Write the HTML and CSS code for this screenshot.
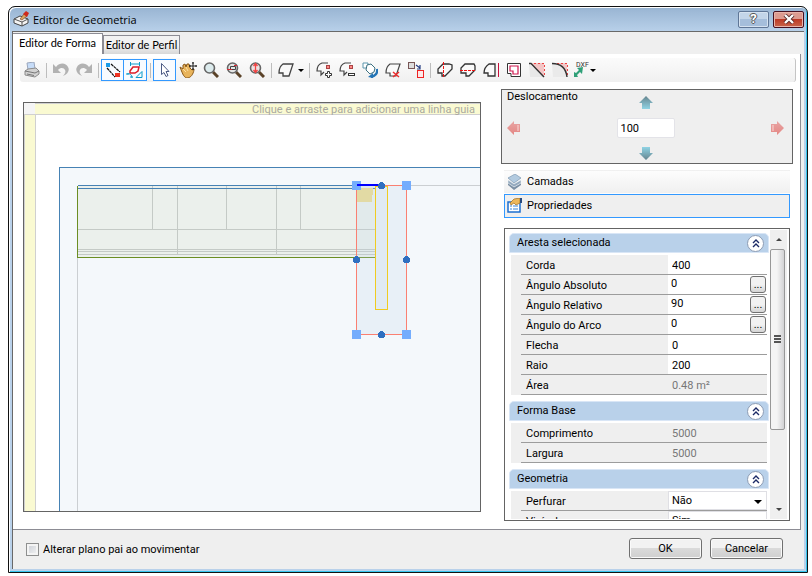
FILE: index.html
```
<!DOCTYPE html>
<html lang="pt-BR">
<head>
    <meta charset="UTF-8">
    <meta name="viewport" content="width=device-width, initial-scale=1.0">
    <title>Editor de Geometria</title>
    <link rel="stylesheet" href="styles.css">
</head>
<body>
    <div class="window">
        <header class="titlebar">
            <svg class="app-icon" width="16" height="16" viewBox="0 0 16 16">
                <path d="M1 8l6-3 8 3v4l-6 3-8-3z" fill="#f4f4f4" stroke="#444"/>
                <path d="M1 8l8 3 6-3M9 11v4" fill="none" stroke="#555"/>
                <path d="M7 8l4-5 3 2-5 4z" fill="#d8a860" stroke="#7a3a20" stroke-width=".6"/>
                <path d="M10 3l3-3 3 2-2 4z" fill="#cf2a1c"/>
            </svg>
            <h1>Editor de Geometria</h1>
            <button class="caption-btn help" type="button" aria-label="Ajuda">?</button>
            <button class="caption-btn close" type="button" aria-label="Fechar">
                <svg width="12" height="10" viewBox="0 0 12 10">
                    <path d="M2 1l8 8M10 1l-8 8" stroke="#5a2a2a" stroke-width="4"/>
                    <path d="M2 1l8 8M10 1l-8 8" stroke="#fff" stroke-width="2.4"/>
                </svg>
            </button>
        </header>

        <main class="client">
            <nav class="tabs">
                <button class="tab active" type="button">Editor de Forma</button>
                <button class="tab" type="button">Editor de Perfil</button>
            </nav>

            <div class="page">
                <div class="toolbar">
                    <button class="tool" type="button" aria-label="Imprimir">
                        <svg width="16" height="16" viewBox="0 0 16 16">
                            <path d="M3 1l7-1 1 7-7 1z" fill="#c6dcf8" stroke="#9aa6bc"/>
                            <path d="M1 9l3-2 8-1 3 3v3l-4 3-10-2z" fill="#d2d2d2" stroke="#8c8c8c"/>
                            <path d="M1 9l10 2 4-2M3 12l7 1.500" fill="none" stroke="#777"/>
                        </svg>
                    </button>
                    <span class="sep"></span>
                    <button class="tool" type="button" aria-label="Desfazer">
                        <svg width="16" height="16" viewBox="0 0 16 16">
                            <path d="M0 2v9h8l-3-3c3-3 6-2 7 0 1 2 0 4-2 6 5-2 7-6 5-9-2-4-8-5-12 0z" fill="#b2b2b2"/>
                        </svg>
                    </button>
                    <button class="tool" type="button" aria-label="Refazer">
                        <svg width="16" height="16" viewBox="0 0 16 16">
                            <path d="M16 2v9H8l3-3C8 5 5 6 4 8c-1 2 0 4 2 6C1 12-1 8 1 5c2-4 8-5 12 0z" fill="#b2b2b2"/>
                        </svg>
                    </button>
                    <span class="sep"></span>
                    <button class="tool on" type="button" aria-label="Guias">
                        <svg width="16" height="16" viewBox="0 0 16 16">
                            <rect x="1" y="1" width="4" height="4" fill="#199be8"/>
                            <rect x="10" y="11" width="5" height="4" fill="#ee3322"/>
                            <path d="M6 2l9 8M2 6l8 9" stroke="#111" stroke-width="1.200" stroke-dasharray="3 .6"/>
                        </svg>
                    </button>
                    <button class="tool on" type="button" aria-label="Cotas">
                        <svg width="18" height="16" viewBox="0 0 18 16">
                            <path d="M4.500 0v4M13.500 0v4M4 2h10" stroke="#0b9ac8" fill="none"/>
                            <path d="M4 9l3-4h6l-1 4-3 2H4z" fill="#fff" stroke="#dc1c28" stroke-width="1.500"/>
                            <path d="M1 12c3-1 5 1 5 4M0 12h3M10 15.500l6-6v6zM4 15h3" stroke="#0b9ac8" fill="none"/>
                        </svg>
                    </button>
                    <span class="sep"></span>
                    <button class="tool on" type="button" aria-label="Selecionar">
                        <svg width="16" height="16" viewBox="0 0 16 16">
                            <path d="M4.500 1.500v11l2.500-2 2 4 2-1-2-4h3z" fill="#fff" stroke="#4b5a84"/>
                        </svg>
                    </button>
                    <button class="tool" type="button" aria-label="Mover vista">
                        <svg width="18" height="16" viewBox="0 0 18 16">
                            <path d="M1 5l3 2 0-4 2-1 1 3 1-3h2l1 4 2 2 2-1c0 3-2 8-6 9-4 0-5-3-8-11z" fill="#e8b45c" stroke="#895717"/>
                            <path d="M4 7l3 3M7 5l2 4" stroke="#fbe0a5"/>
                            <path d="M14 0v8M10 4h8M13 1h2M13 7h2M11 3v2M17 3v2" stroke="#222"/>
                        </svg>
                    </button>
                    <button class="tool" type="button" aria-label="Zoom">
                        <svg width="16" height="16" viewBox="0 0 16 16">
                            <path d="M10 10l5 5" stroke="#5a4228" stroke-width="3"/>
                            <circle cx="6.500" cy="6" r="5" fill="#dcebed" stroke="#666" stroke-width="1.600"/>
                        </svg>
                    </button>
                    <button class="tool" type="button" aria-label="Zoom janela">
                        <svg width="16" height="16" viewBox="0 0 16 16">
                            <path d="M10 10l5 5" stroke="#5a4228" stroke-width="3"/>
                            <circle cx="6.500" cy="6" r="5" fill="#e4e6e6" stroke="#666" stroke-width="1.600"/>
                            <path d="M4.500 4.500h5v3h-5z" fill="none" stroke="#444"/>
                            <path d="M1 7.500h5M8 3.500h3" fill="none" stroke="#d52a36"/>
                        </svg>
                    </button>
                    <button class="tool" type="button" aria-label="Zoom extensão">
                        <svg width="16" height="16" viewBox="0 0 16 16">
                            <path d="M10 10l5 5" stroke="#5a4228" stroke-width="3"/>
                            <circle cx="6.500" cy="6" r="5" fill="#eee2e2" stroke="#666" stroke-width="1.600"/>
                            <path d="M6.500 2v8M4.500 4l2-2.500 2 2.500M4.500 8l2 2.500 2-2.500" fill="none" stroke="#f04444" stroke-width="1.300"/>
                        </svg>
                    </button>
                    <span class="sep"></span>
                    <button class="tool" type="button" aria-label="Forma">
                        <svg width="16" height="16" viewBox="0 0 16 16">
                            <path d="M5 2h10l-4 12H5v-3H1c0-4 1-7 4-9z" fill="#fafafa" stroke="#444" stroke-width="1.300"/>
                        </svg>
                    </button>
                    <button class="drop" type="button" aria-label="Mais formas"></button>
                    <span class="sep"></span>
                    <button class="tool" type="button" aria-label="Adicionar ponto">
                        <svg width="16" height="16" viewBox="0 0 16 16">
                            <path d="M12 1H6C3 2 1 5 1 9h4v4l3-3" fill="#fafafa" stroke="#444" stroke-width="1.200"/>
                            <rect x="10.500" y="3.500" width="3" height="3" fill="#f88" stroke="#a44"/>
                            <path d="M11.500 9.500h2v2h2v2h-2v2h-2v-2h-2v-2h2z" fill="#fff" stroke="#333"/>
                        </svg>
                    </button>
                    <button class="tool" type="button" aria-label="Remover ponto">
                        <svg width="16" height="16" viewBox="0 0 16 16">
                            <path d="M12 1H6C3 2 1 5 1 9h4v4l3-3" fill="#fafafa" stroke="#444" stroke-width="1.200"/>
                            <rect x="10.500" y="3.500" width="3" height="3" fill="#f88" stroke="#a44"/>
                            <rect x="9.500" y="11.500" width="6" height="2" fill="#fff" stroke="#333"/>
                        </svg>
                    </button>
                    <button class="tool" type="button" aria-label="Girar">
                        <svg width="16" height="16" viewBox="0 0 16 16">
                            <path d="M1 1h5v5H1z" fill="#fff" stroke="#5a96ad"/>
                            <path d="M5 3l4-1 4 4-1 4-4 2-4-4z" fill="#fff" stroke="#3c7080"/>
                            <path d="M15 7c1 4-2 7-6 8" fill="none" stroke="#2374b5" stroke-width="2.500"/>
                            <path d="M6 15l5-4v5z" fill="#2374b5"/>
                        </svg>
                    </button>
                    <button class="tool" type="button" aria-label="Excluir forma">
                        <svg width="16" height="16" viewBox="0 0 16 16">
                            <path d="M5 2h10l-4 12H5v-3H1c0-4 1-7 4-9z" fill="#fafafa" stroke="#444" stroke-width="1.200"/>
                            <path d="M8 10l6 5M14 10l-6 5" stroke="#ee2b2b" stroke-width="1.500"/>
                        </svg>
                    </button>
                    <button class="tool" type="button" aria-label="Copiar forma">
                        <svg width="16" height="16" viewBox="0 0 16 16">
                            <rect x=".5" y=".5" width="6" height="6" fill="#ddd" stroke="#755"/>
                            <path d="M8 3l4 3M12 3v4H9" fill="none" stroke="#223a80" stroke-width="1.200"/>
                            <rect x="9.500" y="8.500" width="6" height="7" fill="#fde8e8" stroke="#e22"/>
                        </svg>
                    </button>
                    <span class="sep"></span>
                    <button class="tool" type="button" aria-label="Espelhar vertical">
                        <svg width="16" height="16" viewBox="0 0 16 16">
                            <path d="M6 2h6l3 1v4l-7 7H5v-3H1V7z" fill="#fafafa" stroke="#333" stroke-width="1.300"/>
                            <path d="M6.500 0v16" stroke="#e11" stroke-dasharray="3 1"/>
                        </svg>
                    </button>
                    <button class="tool" type="button" aria-label="Espelhar horizontal">
                        <svg width="16" height="16" viewBox="0 0 16 16">
                            <path d="M5 2h9l1 2v4l-6 6H6v-3H1V6z" fill="#fafafa" stroke="#333" stroke-width="1.300"/>
                            <path d="M0 8.500h16" stroke="#e11" stroke-dasharray="3 1"/>
                        </svg>
                    </button>
                    <button class="tool" type="button" aria-label="Deslocar aresta">
                        <svg width="16" height="16" viewBox="0 0 16 16">
                            <path d="M12 2H6C3 4 1 7 1 11h4v3h7z" fill="#fafafa" stroke="#333" stroke-width="1.300"/>
                            <path d="M15.500 1v14" stroke="#c8103c"/>
                        </svg>
                    </button>
                    <button class="tool" type="button" aria-label="Contorno">
                        <svg width="16" height="16" viewBox="0 0 16 16">
                            <path d="M1.500 1.500h13v13H5v-3H1.500z" fill="#fff" stroke="#333"/>
                            <path d="M4 4h8v8H7V9H4z" fill="#fff" stroke="#d01850" stroke-width="1.200"/>
                        </svg>
                    </button>
                    <button class="tool" type="button" aria-label="Chanfro">
                        <svg width="16" height="16" viewBox="0 0 16 16">
                            <path d="M0 2l1 13h14z" fill="#e8e8e8"/>
                            <path d="M1 1h14v14z" fill="#f3c6c6"/>
                            <path d="M5 1.500h10.500V15" fill="none" stroke="#e44" stroke-dasharray="2 2"/>
                            <path d="M0 1.500h2L15 15" fill="none" stroke="#333" stroke-width="1.400"/>
                        </svg>
                    </button>
                    <button class="tool" type="button" aria-label="Arredondar">
                        <svg width="16" height="16" viewBox="0 0 16 16">
                            <path d="M0 2c9 0 14 5 15 13H1z" fill="#eaeaea"/>
                            <path d="M3 1h12v13C14 6 10 2 3 1z" fill="#f3c6c6"/>
                            <path d="M5 1.500h10.500V15" fill="none" stroke="#e44" stroke-dasharray="2 2"/>
                            <path d="M0 1.500c9 0 14 5 15 13.500" fill="none" stroke="#333" stroke-width="1.400"/>
                        </svg>
                    </button>
                    <button class="tool dxf" type="button" aria-label="Importar DXF">
                        <svg width="18" height="18" viewBox="0 0 18 18">
                            <path d="M3 16v-5l2 1 3-3-2-2 6-1-1 7-2-2-3 3 1 2z" fill="#2fa078"/>
                            <text x="5" y="6">DXF</text>
                        </svg>
                    </button>
                    <button class="drop" type="button" aria-label="Opções DXF"></button>
                </div>

                <div class="workspace">
                    <!-- Drawing area, 1 unit = 1px -->
                    <svg class="canvas">
                        <rect class="plane" x="35.500" y="64.500" width="100%" height="100%"/>
                        <path class="axis" d="M53.500 155v2000M387 82.500h2000"/>

                        <rect class="room" x="54" y="83" width="298" height="71"/>
                        <path class="grid" d="M128.500 83v43M153.500 83v68M202.500 83v43M252.500 83v68M276.500 83v43
                            M54 126.500h298M54 146.500h298M54 148.500h298M54 151.500h298"/>
                        <path class="wall" d="M53.500 83v71.500H352"/>
                        <path class="edge" d="M54 82.500h298M54 85.500h298"/>

                        <rect class="selection" x="332.500" y="82.500" width="50" height="149"/>
                        <path class="corner-mark" d="M333 85h16v7h-1v7h-15z"/>
                        <rect class="pillar" x="351.500" y="83.500" width="12" height="123"/>

                        <rect class="handle" x="328" y="78" width="9" height="9"/>
                        <rect class="handle" x="378" y="78" width="9" height="9"/>
                        <rect class="handle" x="328" y="227" width="9" height="9"/>
                        <rect class="handle" x="378" y="227" width="9" height="9"/>
                        <path class="active-edge" d="M333 82h22"/>
                        <circle class="mid" cx="357.500" cy="82.500" r="3.500"/>
                        <circle class="mid" cx="332.500" cy="156.500" r="3.500"/>
                        <circle class="mid" cx="382.500" cy="156.500" r="3.500"/>
                        <circle class="mid" cx="357.500" cy="231.500" r="3.500"/>

                        <rect class="ruler" x=".5" y=".5" width="11" height="100%"/>
                        <rect class="ruler" x=".5" y=".5" width="100%" height="11"/>
                        <rect class="ruler-corner" x="0" y="0" width="11" height="11"/>
                        <text class="hint" x="100%" dx="-5" y="10">Clique e arraste para adicionar uma linha guia</text>
                    </svg>

                    <aside class="side">
                        <div class="offset">
                            <label for="offset">Deslocamento</label>
                            <button class="arrow up" type="button" aria-label="Para cima">
                                <svg width="14" height="13" viewBox="0 0 14 13"><path d="M7 0l7 7h-3v6H3V7H0z" fill="url(#teal)"/></svg>
                            </button>
                            <button class="arrow left" type="button" aria-label="Para a esquerda">
                                <svg width="13" height="14" viewBox="0 0 13 14"><path d="M0 7l7-7v3h6v8H7v3z" fill="url(#red)"/><path d="M11 4v6" stroke="#fbd8d6"/></svg>
                            </button>
                            <input id="offset" type="text" value="100">
                            <button class="arrow right" type="button" aria-label="Para a direita">
                                <svg width="13" height="14" viewBox="0 0 13 14"><path d="M13 7L6 0v3H0v8h6v3z" fill="url(#red)"/><path d="M2 4v6" stroke="#fbd8d6"/></svg>
                            </button>
                            <button class="arrow down" type="button" aria-label="Para baixo">
                                <svg width="14" height="13" viewBox="0 0 14 13">
                                    <defs>
                                        <linearGradient id="teal" x2="0" y2="1">
                                            <stop offset="0" stop-color="#66858f"/>
                                            <stop offset="1" stop-color="#8fd3e4"/>
                                        </linearGradient>
                                        <linearGradient id="teal-down" x2="0" y2="1">
                                            <stop offset="0" stop-color="#8fd3e4"/>
                                            <stop offset="1" stop-color="#66858f"/>
                                        </linearGradient>
                                        <linearGradient id="red" x2="0" y2="1">
                                            <stop offset="0" stop-color="#e8a5a4"/>
                                            <stop offset="1" stop-color="#e48784"/>
                                        </linearGradient>
                                    </defs>
                                    <path d="M7 13l7-7h-3V0H3v6H0z" fill="url(#teal-down)"/>
                                </svg>
                            </button>
                        </div>

                        <div class="stack">
                            <button type="button">
                                <svg width="16" height="16" viewBox="0 0 16 16">
                                    <path d="M1 9l6 4 7-4v2l-7 5-6-5z" fill="#7b8fa4"/>
                                    <path d="M1 6l6 4 7-4v3l-7 4-6-4z" fill="#94a9be" stroke="#f4f8fb" stroke-width=".5"/>
                                    <path d="M1 4l7-4 6 4-7 5z" fill="#b3cbe0" stroke="#7e98b2" stroke-width=".7"/>
                                </svg>
                                Camadas
                            </button>
                            <button class="current" type="button">
                                <svg width="16" height="16" viewBox="0 0 16 16">
                                    <rect x="1" y="4" width="12" height="10" fill="#fff" stroke="#1c6fd0" stroke-width="1.500"/>
                                    <path d="M3 8h2M3 11h2M6 8h5M6 11h5" stroke="#3b87dc"/>
                                    <path d="M3 5l4-4 6-1v5l-4 2-2-2-3 2z" fill="#edb85c" stroke="#9a6a20" stroke-width=".7"/>
                                    <path d="M13 0h2v5h-2z" fill="#284a7e"/>
                                </svg>
                                Propriedades
                            </button>
                        </div>

                        <div class="props">
                            <div class="groups">
                                <section>
                                    <h2>Aresta selecionada <button class="fold" type="button" aria-label="Recolher"><svg width="8" height="9" viewBox="0 0 8 9"><path d="M1 4l3-3 3 3M1 8l3-3 3 3"/></svg></button></h2>
                                    <div class="rows">
                                        <div class="row"><label for="corda">Corda</label><input id="corda" value="400"></div>
                                        <div class="row"><label for="abs">Ângulo Absoluto</label><span class="with-btn"><input id="abs" value="0"><button type="button">...</button></span></div>
                                        <div class="row"><label for="rel">Ângulo Relativo</label><span class="with-btn"><input id="rel" value="90"><button type="button">...</button></span></div>
                                        <div class="row"><label for="arco">Ângulo do Arco</label><span class="with-btn"><input id="arco" value="0"><button type="button">...</button></span></div>
                                        <div class="row"><label for="flecha">Flecha</label><input id="flecha" value="0"></div>
                                        <div class="row"><label for="raio">Raio</label><input id="raio" value="200"></div>
                                        <div class="row"><label for="area">Área</label><input id="area" value="0.48 m²" readonly></div>
                                    </div>
                                </section>
                                <section>
                                    <h2>Forma Base <button class="fold" type="button" aria-label="Recolher"><svg width="8" height="9" viewBox="0 0 8 9"><path d="M1 4l3-3 3 3M1 8l3-3 3 3"/></svg></button></h2>
                                    <div class="rows">
                                        <div class="row"><label for="comp">Comprimento</label><input id="comp" value="5000" readonly></div>
                                        <div class="row"><label for="larg">Largura</label><input id="larg" value="5000" readonly></div>
                                    </div>
                                </section>
                                <section>
                                    <h2>Geometria <button class="fold" type="button" aria-label="Recolher"><svg width="8" height="9" viewBox="0 0 8 9"><path d="M1 4l3-3 3 3M1 8l3-3 3 3"/></svg></button></h2>
                                    <div class="rows">
                                        <div class="row"><label for="perf">Perfurar</label><span class="combo"><select id="perf"><option>Não</option><option>Sim</option></select></span></div>
                                        <div class="row"><label for="vis">Visível</label><span class="combo"><select id="vis"><option>Sim</option><option>Não</option></select></span></div>
                                    </div>
                                </section>
                            </div>
                            <div class="scrollbar">
                                <span class="tri tri-up"></span>
                                <div class="track"><div class="thumb"></div></div>
                                <span class="tri tri-down"></span>
                            </div>
                        </div>
                    </aside>
                </div>
            </div>

            <footer>
                <label><input type="checkbox"> Alterar plano pai ao movimentar</label>
                <button type="button">OK</button>
                <button type="button">Cancelar</button>
            </footer>
        </main>
    </div>
</body>
</html>
```
FILE: styles.css
```
* {
    box-sizing: border-box;
}

body {
    margin: 0;
    padding: 6px 4px 3px 8px;
    height: 100vh;
    background: #fff;
    color: #000;
    font-family: Roboto, "Liberation Sans", sans-serif;
    font-size: 11px;
    line-height: 14px;
}

button, input, select {
    font: inherit;
    color: inherit;
    margin: 0;
    padding: 0;
    border: 0;
    border-radius: 0;
    background: none;
}

svg {
    display: block;
}

/* window frame */
.window {
    height: 100%;
    display: flex;
    flex-direction: column;
    padding: 0 3px 3px;
    border: 1px solid #111;
    border-radius: 7px 7px 0 0;
    background: linear-gradient(#98b4d2, #b9d1ea 25px);
    box-shadow: inset 1px 1px 0 #fff, inset -1px -1px 0 #35c5ee;
}

.titlebar {
    display: flex;
    align-items: center;
    height: 24px;
    gap: 4px;
    flex: none;
}

.titlebar h1 {
    flex: 1;
    margin: 0;
    padding-top: 1px;
    font-family: "Open Sans", sans-serif;
    font-size: 11px;
    font-weight: normal;
}

.app-icon {
    margin-left: 1px;
}

.caption-btn {
    width: 31px;
    height: 17px;
    display: flex;
    align-items: center;
    justify-content: center;
    border: 1px solid #5f7696;
    border-radius: 2px;
    background: linear-gradient(#c3d5e9 50%, #a5bedb 50%);
    box-shadow: inset 0 0 0 1px #d5e2f0;
}

.help {
    color: #fff;
    font-size: 13px;
    font-weight: bold;
    text-shadow: 1px 0 #555, -1px 0 #555, 0 1px #555, 0 -1px #555;
}

.close {
    border-color: #451020;
    background: linear-gradient(#dd9b90 45%, #bd3a26 50%, #c8654b);
    box-shadow: inset 0 0 0 1px #e8b3aa;
}

.client {
    flex: 1;
    min-height: 0;
    display: flex;
    flex-direction: column;
    border-top: 1px solid #696969;
    border-left: 1px solid #696969;
    background: #efefef;
}

/* tabs */
.tabs {
    display: flex;
    align-items: flex-end;
    height: 22px;
    flex: none;
}

.tab {
    height: 19px;
    width: 77px;
    border: 1px solid #8c8c94;
    border-bottom: 0;
    background: linear-gradient(#f2f2f2 50%, #d8d8d8);
    font-family: Lato, Roboto, sans-serif;
    white-space: nowrap;
}

.tab.active {
    width: 90px;
    height: 21px;
    padding-bottom: 2px;
    border-left: 0;
    background: #fff;
}

.page {
    flex: 1;
    min-height: 0;
    display: flex;
    flex-direction: column;
    margin-right: 3px;
    padding: 4px 4px 8px 7px;
    border: 1px solid #8c8c94;
    border-width: 0 1px 1px 0;
    background: #fff;
}

/* toolbar */
.toolbar {
    display: flex;
    align-items: center;
    height: 24px;
    flex: none;
    border-radius: 3px;
    border-right: 1px solid #c4c4c4;
    background: linear-gradient(#fbfbfb, #f0f0f0);
}

.tool {
    width: 23px;
    height: 22px;
    display: flex;
    align-items: center;
    justify-content: center;
    flex: none;
}

.tool.on {
    border: 1px solid #3399ff;
    background: #f8fbff;
}

.tool.on + .tool.on {
    border-left: 0;
}

.sep {
    width: 6px;
    height: 15px;
    flex: none;
    background: linear-gradient(#bdbdbd, #bdbdbd) 3px 0 / 1px 100% no-repeat;
}

.drop {
    width: 9px;
    height: 22px;
}

.drop::before {
    content: "";
    display: block;
    margin-left: 1px;
    border: 3px solid transparent;
    border-top-color: #000;
    border-bottom: 0;
    width: 0;
}

.dxf {
    width: 18px;
}

.dxf text {
    font-size: 7px;
    fill: #333;
}

/* workspace */
.workspace {
    flex: 1;
    min-height: 0;
    display: flex;
    gap: 20px;
    padding: 7px 3px 0;
}

.canvas {
    flex: 1;
    min-width: 0;
    align-self: stretch;
    margin: 13px 0 9px;
    border: 1px solid #646464;
    background: #fff;
    overflow: hidden;
    shape-rendering: crispEdges;
}

.plane {
    fill: #f4f8fb;
    stroke: #4682b4;
}

.axis {
    fill: none;
    stroke: #cbcfd2;
}

.room {
    fill: #ebf0ec;
}

.grid {
    fill: none;
    stroke: #c4cac6;
}

.wall {
    fill: none;
    stroke: #6b8e23;
}

.edge {
    fill: none;
    stroke: #4682b4;
}

.selection {
    fill: rgba(190, 212, 232, .22);
    stroke: #fa8072;
}

.corner-mark {
    fill: #e2daa4;
}

.pillar {
    fill: #e0eaf3;
    stroke: #f0cc20;
}

.handle {
    fill: #74adfd;
}

.active-edge {
    stroke: #0000ff;
    stroke-width: 2;
}

.mid {
    fill: #2f6fc0;
}

.ruler {
    fill: #fafad2;
    stroke: #d0d0d0;
}

.ruler-corner {
    fill: #f5f5f5;
}

.hint {
    fill: #a9a9a0;
    font-size: 11px;
    text-anchor: end;
}

/* right side */
.side {
    width: 292px;
    display: flex;
    flex-direction: column;
    flex: none;
}

.offset {
    display: grid;
    grid-template-columns: 1fr 58px 1fr;
    grid-template-rows: 13px 20px 13px;
    row-gap: 9px;
    align-items: center;
    height: 75px;
    padding: 6px 8px 3px 5px;
    border: 1px solid #646464;
    background: #efefef;
}

.offset label {
    align-self: start;
    grid-area: 1 / 1;
    margin-top: -6px;
}

.offset input {
    grid-area: 2 / 2;
    height: 20px;
    padding: 0 3px;
    border: 1px solid #e3e3e8;
    border-radius: 2px;
    background: #fff;
}

.up {
    grid-area: 1 / 2;
    justify-self: center;
}

.left {
    grid-area: 2 / 1;
    justify-self: start;
}

.right {
    grid-area: 2 / 3;
    justify-self: end;
}

.down {
    grid-area: 3 / 2;
    justify-self: center;
}

.stack {
    margin: 6px 3px 10px;
    flex: none;
}

.stack button {
    display: flex;
    align-items: center;
    gap: 4px;
    width: 100%;
    height: 24px;
    padding: 0 2px;
    border: 1px solid transparent;
    background: linear-gradient(#fdfdfd, #f0f0f0);
}

.stack .current {
    border-color: #3399ff;
    background: #efefef;
}

/* property grid */
.props {
    flex: 1;
    min-height: 0;
    display: flex;
    margin: 0 3px;
    padding: 1px 2px 1px 4px;
    border: 1px solid #646464;
    background: #fff;
}

.groups {
    flex: 1;
    overflow: hidden;
    padding-top: 3px;
}

section {
    margin-bottom: 6px;
}

h2 {
    display: flex;
    align-items: center;
    justify-content: space-between;
    height: 20px;
    margin: 0 0 2px;
    padding: 0 4px 0 7px;
    border: 1px solid #d9e6f6;
    border-radius: 5px 5px 0 0;
    background: #b9d1ea;
    font-size: 11px;
    font-weight: normal;
}

.fold {
    display: flex;
    align-items: center;
    justify-content: center;
    width: 17px;
    height: 17px;
    border: 1px solid #8c9cb4;
    border-radius: 50%;
    background: #fff;
}

.fold path {
    fill: none;
    stroke: #1c2a66;
    stroke-width: 1.4;
}

.rows {
    margin: 0 2px;
    padding-left: 10px;
    background: #efefef;
}

.row {
    display: grid;
    grid-template-columns: 1fr 99px;
    height: 20px;
    border-bottom: 1px solid #9c9c9c;
}

.row label {
    padding: 4px 0 0 5px;
}

.row input {
    width: 100%;
    min-width: 0;
    padding: 2px 4px 0;
    background: #fff;
}

.row input[readonly] {
    background: none;
    color: #777;
}

.with-btn {
    display: flex;
    background: #fff;
}

.with-btn input {
    padding: 0 3px 1px;
}

.with-btn button {
    flex: none;
    width: 16px;
    height: 17px;
    margin: 1px 1px 0 0;
    border: 1px solid #707070;
    border-radius: 3px;
    background: linear-gradient(#f2f2f2 50%, #d4d4d4);
}

.combo {
    position: relative;
}

.combo select {
    width: 100%;
    height: 19px;
    padding: 0 3px;
    border: 1px solid #dfdfe4;
    background: #fff;
    appearance: none;
}

.combo::after {
    content: "";
    position: absolute;
    top: 9px;
    right: 5px;
    border: 4px solid transparent;
    border-top-color: #000;
    border-bottom: 0;
    pointer-events: none;
}

.scrollbar {
    display: flex;
    flex-direction: column;
    width: 17px;
    margin-left: 1px;
    background: #efefef;
}

.tri {
    height: 19px;
    display: flex;
    align-items: center;
    justify-content: center;
    flex: none;
}

.tri::before {
    content: "";
    border: 3px solid transparent;
}

.tri-up::before {
    border-bottom-color: #444;
    border-top: 0;
}

.tri-down::before {
    border-top-color: #444;
    border-bottom: 0;
}

.track {
    flex: 1;
}

.thumb {
    height: 72%;
    width: 15px;
    display: flex;
    align-items: center;
    justify-content: center;
    border: 1px solid #979797;
    border-radius: 2px;
    background: linear-gradient(90deg, #f4f4f4 45%, #d2d2d4);
}

.thumb::before {
    content: "";
    width: 7px;
    height: 8px;
    background: repeating-linear-gradient(#555 0 2px, #f4f4f4 2px 3px);
}

/* footer */
footer {
    display: flex;
    align-items: center;
    gap: 8px;
    height: 39px;
    padding: 0 21px 2px 13px;
    flex: none;
}

footer label {
    display: flex;
    align-items: center;
    gap: 4px;
    flex: 1;
    padding-top: 2px;
}

footer input {
    width: 13px;
    height: 13px;
    border: 1px solid #8e8f8f;
    background: linear-gradient(135deg, #c8ccd4, #f6f6f6);
    box-shadow: inset 0 0 0 2px #f4f4f4;
    appearance: none;
}

footer button {
    width: 73px;
    height: 21px;
    border: 1px solid #707070;
    border-radius: 3px;
    background: linear-gradient(#f2f2f2 50%, #dadada 50%, #cfcfcf);
    box-shadow: inset 0 0 0 1px #fafafa;
}
```
